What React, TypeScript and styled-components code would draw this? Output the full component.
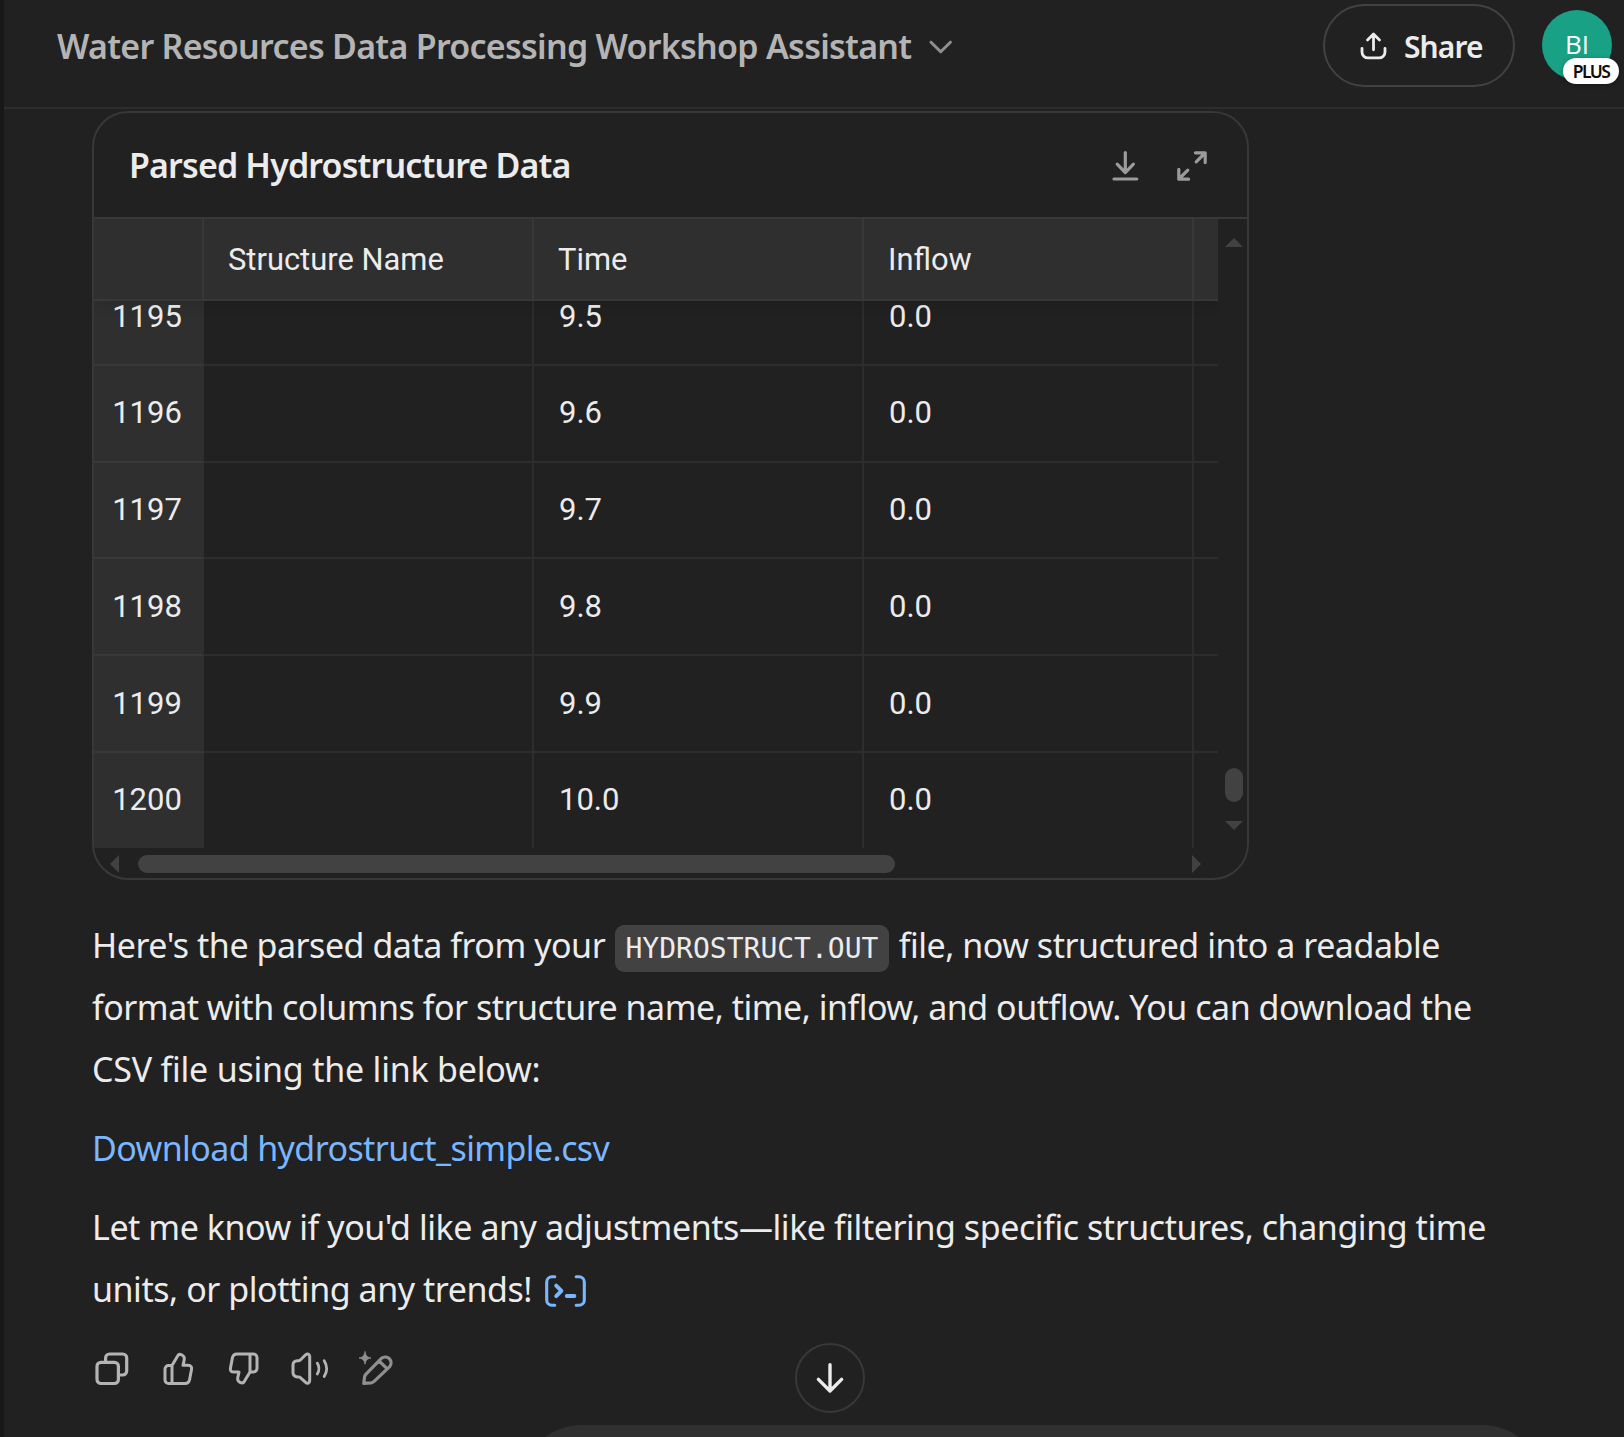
import React from "react";
import styled, { createGlobalStyle } from "styled-components";

const GlobalStyle = createGlobalStyle`
  * { box-sizing: border-box; }
  body { margin: 0; background: #212121; color: #ececec; overflow: hidden; }
`;

const sans = `"Noto Sans", "Open Sans", sans-serif`;

const Shell = styled.div`
  display: flex;
  width: 1624px;
  height: 1437px;
  overflow: hidden;
  background: #212121;
  font-family: ${sans};
`;

const SidebarEdge = styled.aside`
  width: 4px;
  background: #181818;
`;

const Main = styled.main`
  position: relative;
  flex: 1;
  min-width: 0;
  display: flex;
  flex-direction: column;
`;

const Header = styled.header`
  display: flex;
  align-items: flex-start;
  height: 109px;
  padding: 4px 12px 0 53px;
  border-bottom: 2px solid #2d2d2d;
`;

const TitleButton = styled.div`
  display: flex;
  align-items: center;
  gap: 18px;
  height: 84px;
  flex: 1;
  color: #8f8f8f;
`;

const Title = styled.h1<{ $tracking: number; $color: string }>`
  margin: 0;
  padding-top: 1px;
  font-size: 34px;
  font-weight: 600;
  line-height: 47px;
  white-space: nowrap;
  letter-spacing: ${(p) => p.$tracking}px;
  color: ${(p) => p.$color};
`;

const ShareButton = styled.button`
  display: flex;
  align-items: center;
  gap: 17px;
  width: 192px;
  height: 83px;
  padding: 0 0 0 35px;
  border: 2px solid #424242;
  border-radius: 42px;
  background: none;
  color: #ececec;
  font: 600 30px/42px ${sans};
  letter-spacing: -0.9px;
`;

const ShareLabel = styled.span`
  padding-top: 2px;
`;

const Avatar = styled.div`
  position: relative;
  display: flex;
  justify-content: center;
  width: 70px;
  height: 70px;
  margin: 6px 0 0 27px;
  border-radius: 50%;
  background: #19a186;
  color: #fff;
  font: 400 26px/34px "Open Sans", sans-serif;
  padding-top: 17px;
`;

const PlusBadge = styled.span`
  position: absolute;
  left: 21px;
  top: 48px;
  width: 56px;
  height: 26px;
  border-radius: 13px;
  background: #fff;
  box-shadow: 0 1px 4px rgba(0, 0, 0, 0.35);
  color: #0d0d0d;
  font: 600 17.5px/27px "Noto Sans", sans-serif;
  letter-spacing: -1.6px;
  text-align: center;
`;

const Thread = styled.section`
  flex: 1;
  min-height: 0;
  padding: 2px 0 0 88px;
`;

const Card = styled.article`
  width: 1157px;
  height: 769px;
  border: 2px solid #383838;
  border-radius: 36px;
  overflow: hidden;
`;

const CardHeader = styled.div`
  display: flex;
  align-items: center;
  justify-content: space-between;
  height: 106px;
  padding: 0 40px 0 35px;
  border-bottom: 2px solid #383838;
`;

const CardActions = styled.div`
  display: flex;
  gap: 38px;
  padding-top: 1px;
  color: #9b9b9b;
`;

const Viewport = styled.div`
  display: grid;
  grid-template-columns: 1124px 29px;
  grid-template-rows: 628.7px 30px;
`;

const Grid = styled.div`
  display: flex;
  flex-direction: column;
  overflow: hidden;
  font-family: Roboto, sans-serif;
`;

const columns = `
  display: grid;
  grid-template-columns: 110px 330px 330px 330px 24px;
`;

const HeadRow = styled.div`
  ${columns}
  position: relative;
  flex: none;
  height: 82px;
  background: #2f2f2f;
  border-bottom: 2px solid #383838;
  box-shadow: 0 4px 14px rgba(0, 0, 0, 0.1);
`;

const HeadCell = styled.div`
  display: flex;
  align-items: center;
  padding-left: 24px;
  border-right: 2px solid #383838;
  font-size: 30.9px;
  &:last-child { border-right: 0; }
`;

const Rows = styled.div`
  flex: 1;
  min-height: 0;
  display: flex;
  flex-direction: column;
  justify-content: flex-end;
`;

const Row = styled.div`
  ${columns}
  flex: none;
  height: 96.75px;
  &:last-child { height: 94.75px; }
`;

const Cell = styled.div`
  display: flex;
  align-items: center;
  padding: 0 0 1px 25px;
  border-right: 2px solid #2d2d2e;
  border-bottom: 2px solid #2d2d2e;
  font-size: 31px;
  &:last-child { border-right: 0; }
  ${Row}:last-child & { border-bottom: 0; }
`;

const IndexCell = styled(Cell)`
  justify-content: center;
  padding: 0 2px 1px 0;
  background: #2f2f2f;
  border-right-color: #2f2f2f;
  border-bottom-color: #383838;
`;

const VerticalBar = styled.div`
  display: flex;
  flex-direction: column;
  align-items: center;
  padding: 19px 0 0 2px;
  color: #424242;
`;

const VerticalThumb = styled.div`
  width: 18px;
  height: 34px;
  margin: 521px 0 19px;
  border-radius: 9px;
  background: #424242;
`;

const HorizontalBar = styled.div`
  display: flex;
  align-items: flex-start;
  padding: 7px 17px 0 16px;
  color: #424242;
`;

const HorizontalThumb = styled.div`
  width: 757px;
  height: 18px;
  margin: 0 auto 0 19px;
  border-radius: 9px;
  background: #424242;
`;

const Paragraph = styled.p<{ $top: number }>`
  margin: ${(p) => p.$top}px 0 0;
  font-size: 34px;
  line-height: 62.3px;
`;

const Line = styled.span<{ $tracking: number }>`
  display: block;
  height: 62.3px;
  white-space: nowrap;
  letter-spacing: ${(p) => p.$tracking}px;
`;

const Code = styled.code`
  margin: 0 9.5px 0 9.5px;
  padding: 7px 10.8px;
  border-radius: 9px;
  background: #424242;
  font: 28px/1 "DejaVu Sans Mono", monospace;
  letter-spacing: 0;
`;

const DownloadLink = styled.a`
  color: #7ab7ff;
`;

const InlineIcon = styled.span`
  margin-left: 13px;
  color: #7ab7ff;
  svg { vertical-align: -4.5px; }
`;

const Actions = styled.div`
  display: flex;
  align-items: flex-start;
  margin-top: 31.5px;
  padding-left: 3px;
  color: #b4b4b4;
`;

const Action = styled.span<{ $width: number; $dim?: boolean }>`
  width: ${(p) => p.$width}px;
  height: 35px;
  color: ${(p) => (p.$dim ? "#8f8f8f" : "inherit")};
`;

const ScrollDown = styled.button`
  position: absolute;
  left: 791px;
  top: 1343px;
  display: flex;
  align-items: center;
  justify-content: center;
  width: 70px;
  height: 70px;
  padding: 0;
  border: 2px solid #383838;
  border-radius: 50%;
  background: #212121;
  color: #ececec;
`;

const ComposerSlot = styled.footer`
  height: 12px;
  overflow: hidden;
  padding-left: 515px;
`;

const Composer = styled.div`
  width: 1026px;
  height: 150px;
  border-radius: 63px;
  background: #303030;
`;

type IconProps = { w: number; h: number; stroke?: number; children: React.ReactNode };

const IconSvg = styled.svg`
  display: block;
  flex: none;
  overflow: visible;
  ${InlineIcon} & { display: inline; }
`;

const Icon = ({ w, h, stroke = 3.2, children }: IconProps) => (
  <IconSvg
    width={w}
    height={h}
    viewBox={`0 0 ${w} ${h}`}
    fill="none"
    stroke="currentColor"
    strokeWidth={stroke}
    strokeLinecap="round"
    strokeLinejoin="round"
  >
    {children}
  </IconSvg>
);

const Arrow = ({ w, h, points }: { w: number; h: number; points: string }) => (
  <IconSvg width={w} height={h} viewBox={`0 0 ${w} ${h}`} fill="currentColor">
    <polygon points={points} />
  </IconSvg>
);

const thumbPath =
  "M9 13.5 14.9 3.6C16.2 1.2 22.3 3 21.2 8L20 13.3h5c2.9 0 4 1.6 3.5 4.2l-1.9 10c-.5 2.6-2 4-4.6 4H5.6A3.6 3.6 0 0 1 2 27.9V17.1a3.6 3.6 0 0 1 3.6-3.6H9v18";

const rows = [
  ["1195", "9.5", "0.0"],
  ["1196", "9.6", "0.0"],
  ["1197", "9.7", "0.0"],
  ["1198", "9.8", "0.0"],
  ["1199", "9.9", "0.0"],
  ["1200", "10.0", "0.0"],
];

export default function App() {
  return (
    <Shell>
      <GlobalStyle />
      <SidebarEdge />
      <Main>
        <Header>
          <TitleButton>
            <Title $tracking={-0.73} $color="#b4b4b4">
              Water Resources Data Processing Workshop Assistant
            </Title>
            <Icon w={24} h={14} stroke={3}>
              <path d="M2 3.2 11.7 12.8 21.4 3.2" />
            </Icon>
          </TitleButton>
          <ShareButton>
            <Icon w={27} h={30} stroke={2.8}>
              <path d="M7.5 9l6-6 6 6M13.5 3.4v15.4M2 17.3v3.6a6 6 0 0 0 6 6h11a6 6 0 0 0 6-6v-3.6" />
            </Icon>
            <ShareLabel>Share</ShareLabel>
          </ShareButton>
          <Avatar>
            BI
            <PlusBadge>PLUS</PlusBadge>
          </Avatar>
        </Header>

        <Thread>
          <Card>
            <CardHeader>
              <Title as="h2" $tracking={-0.86} $color="#ececec">
                Parsed Hydrostructure Data
              </Title>
              <CardActions>
                <Icon w={27} h={30}>
                  <path d="M13.3 1.6v20M5.2 13.2l8.1 8.4 8.1-8.4M2 28h22.8" />
                </Icon>
                <Icon w={30} h={30}>
                  <path d="M18.4 1.8h9.8v9.8M28 2 19.2 10.8M1.8 18.4v9.8h9.8M2 28l8.8-8.8" />
                </Icon>
              </CardActions>
            </CardHeader>
            <Viewport>
              <Grid>
                <HeadRow>
                  <HeadCell />
                  <HeadCell>Structure Name</HeadCell>
                  <HeadCell>Time</HeadCell>
                  <HeadCell>Inflow</HeadCell>
                  <HeadCell />
                </HeadRow>
                <Rows>
                  {rows.map(([index, time, inflow]) => (
                    <Row key={index}>
                      <IndexCell>{index}</IndexCell>
                      <Cell />
                      <Cell>{time}</Cell>
                      <Cell>{inflow}</Cell>
                      <Cell />
                    </Row>
                  ))}
                </Rows>
              </Grid>
              <VerticalBar>
                <Arrow w={18} h={9} points="0,9 9,0 18,9" />
                <VerticalThumb />
                <Arrow w={18} h={9} points="0,0 9,9 18,0" />
              </VerticalBar>
              <HorizontalBar>
                <Arrow w={9} h={18} points="9,0 0,9 9,18" />
                <HorizontalThumb />
                <Arrow w={9} h={18} points="0,0 9,9 0,18" />
              </HorizontalBar>
            </Viewport>
          </Card>

          <Paragraph $top={33.6}>
            <Line $tracking={-0.47}>
              Here's the parsed data from your
              <Code>HYDROSTRUCT.OUT</Code>
              file, now structured into a readable
            </Line>
            <Line $tracking={-0.49}>
              format with columns for structure name, time, inflow, and outflow. You can download the
            </Line>
            <Line $tracking={-0.22}>CSV file using the link below:</Line>
          </Paragraph>
          <Paragraph $top={16.5}>
            <Line $tracking={-0.6}>
              <DownloadLink>Download hydrostruct_simple.csv</DownloadLink>
            </Line>
          </Paragraph>
          <Paragraph $top={16.5}>
            <Line $tracking={-0.44}>
              Let me know if you'd like any adjustments—like filtering specific structures, changing time
            </Line>
            <Line $tracking={-0.45}>
              units, or plotting any trends!
              <InlineIcon>
                <Icon w={41} h={32} stroke={3.1}>
                  <path d="M9.8 1.7H7a5.3 5.3 0 0 0-5.3 5.3v18A5.3 5.3 0 0 0 7 30.3h2.8M31.2 1.7H34a5.3 5.3 0 0 1 5.3 5.3v18a5.3 5.3 0 0 1-5.3 5.3h-2.8" />
                  <path d="M11.2 10.6l5.2 5.3-5.2 5.3M21.8 21h7.6" strokeWidth={3.9} />
                </Icon>
              </InlineIcon>
            </Line>
          </Paragraph>

          <Actions>
            <Action $width={68}>
              <Icon w={34} h={34}>
                <rect x={2} y={10.3} width={21.4} height={21.2} rx={4} />
                <path d="M10.6 10.2V6a4 4 0 0 1 4-4h13.1a4 4 0 0 1 4 4v13a4 4 0 0 1-4 4h-4.2" />
              </Icon>
            </Action>
            <Action $width={66}>
              <Icon w={30} h={34} stroke={3}>
                <path d={thumbPath} />
              </Icon>
            </Action>
            <Action $width={62}>
              <Icon w={30} h={34} stroke={3}>
                <path d={thumbPath} transform="rotate(180 15 16.7)" />
              </Icon>
            </Action>
            <Action $width={67}>
              <Icon w={38} h={34} stroke={3}>
                <path d="M6.2 8.7h1.6c.8 0 1.2-.3 1.8-.9l5-5c1.8-1.6 4.1-.9 4.1 1.8v24c0 2.7-2.3 3.4-4.1 1.8l-5-4.6c-.6-.6-1-.9-1.8-.9H6.2A4.2 4.2 0 0 1 2 20.7v-7.8a4.2 4.2 0 0 1 4.2-4.2z" />
                <path d="M26.3 11.1c2 3.3 2 7.7 0 11M33.2 8.8c3.1 5 3.1 10.8 0 15.8" strokeWidth={2.8} />
              </Icon>
            </Action>
            <Action $width={40} $dim>
              <Icon w={35} h={34}>
                <path d="M5.8 31.3l.7-6.1c.2-1.2.7-2.2 1.5-3.1L23.4 6.3a5.9 5.9 0 0 1 8.3 8.3L16.1 29.4c-.9.8-1.9 1.4-3.1 1.5zM20.8 8.7l7.4 7.2" />
                <path
                  d="M7-.2C7.8 3.8 9 5.1 13 6 9 6.9 7.8 8.2 7 12.2 6.2 8.2 5 6.9 1 6 5 5.1 6.2 3.8 7-.2z"
                  fill="currentColor"
                  strokeWidth={0.8}
                />
              </Icon>
            </Action>
          </Actions>
        </Thread>

        <ComposerSlot>
          <Composer />
        </ComposerSlot>
        <ScrollDown aria-label="Scroll to bottom">
          <Icon w={28} h={30} stroke={3.4}>
            <path d="M14 1.7v26M2.4 16.4 14 28l11.6-11.6" />
          </Icon>
        </ScrollDown>
      </Main>
    </Shell>
  );
}
